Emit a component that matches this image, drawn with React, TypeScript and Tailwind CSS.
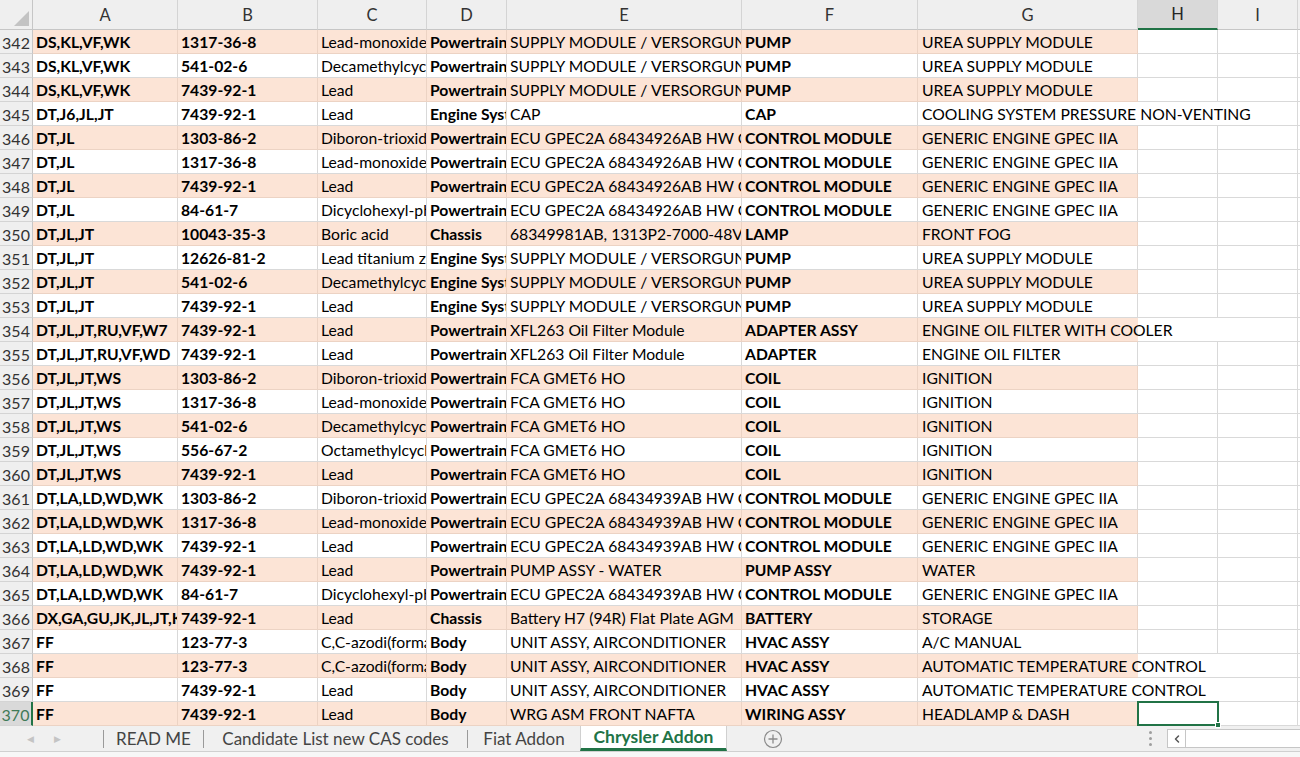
import { ChevronLeft } from "lucide-react";

type Row = [number, string, string, string, string, string, string, string];

const ROWS: Row[] = [
  [342, "DS,KL,VF,WK", "1317-36-8", "Lead-monoxide", "Powertrain", "SUPPLY MODULE / VERSORGUNGSMODUL", "PUMP", "UREA SUPPLY MODULE"],
  [343, "DS,KL,VF,WK", "541-02-6", "Decamethylcyclopentasiloxane", "Powertrain", "SUPPLY MODULE / VERSORGUNGSMODUL", "PUMP", "UREA SUPPLY MODULE"],
  [344, "DS,KL,VF,WK", "7439-92-1", "Lead", "Powertrain", "SUPPLY MODULE / VERSORGUNGSMODUL", "PUMP", "UREA SUPPLY MODULE"],
  [345, "DT,J6,JL,JT", "7439-92-1", "Lead", "Engine Systems", "CAP", "CAP", "COOLING SYSTEM PRESSURE NON-VENTING"],
  [346, "DT,JL", "1303-86-2", "Diboron-trioxide", "Powertrain", "ECU GPEC2A 68434926AB HW C", "CONTROL MODULE", "GENERIC ENGINE GPEC IIA"],
  [347, "DT,JL", "1317-36-8", "Lead-monoxide", "Powertrain", "ECU GPEC2A 68434926AB HW C", "CONTROL MODULE", "GENERIC ENGINE GPEC IIA"],
  [348, "DT,JL", "7439-92-1", "Lead", "Powertrain", "ECU GPEC2A 68434926AB HW C", "CONTROL MODULE", "GENERIC ENGINE GPEC IIA"],
  [349, "DT,JL", "84-61-7", "Dicyclohexyl-phthalate", "Powertrain", "ECU GPEC2A 68434926AB HW C", "CONTROL MODULE", "GENERIC ENGINE GPEC IIA"],
  [350, "DT,JL,JT", "10043-35-3", "Boric acid", "Chassis", "68349981AB, 1313P2-7000-48V", "LAMP", "FRONT FOG"],
  [351, "DT,JL,JT", "12626-81-2", "Lead titanium zirconium oxide", "Engine Systems", "SUPPLY MODULE / VERSORGUNGSMODUL", "PUMP", "UREA SUPPLY MODULE"],
  [352, "DT,JL,JT", "541-02-6", "Decamethylcyclopentasiloxane", "Engine Systems", "SUPPLY MODULE / VERSORGUNGSMODUL", "PUMP", "UREA SUPPLY MODULE"],
  [353, "DT,JL,JT", "7439-92-1", "Lead", "Engine Systems", "SUPPLY MODULE / VERSORGUNGSMODUL", "PUMP", "UREA SUPPLY MODULE"],
  [354, "DT,JL,JT,RU,VF,W7", "7439-92-1", "Lead", "Powertrain", "XFL263 Oil Filter Module", "ADAPTER ASSY", "ENGINE OIL FILTER WITH COOLER"],
  [355, "DT,JL,JT,RU,VF,WD", "7439-92-1", "Lead", "Powertrain", "XFL263 Oil Filter Module", "ADAPTER", "ENGINE OIL FILTER"],
  [356, "DT,JL,JT,WS", "1303-86-2", "Diboron-trioxide", "Powertrain", "FCA GMET6 HO", "COIL", "IGNITION"],
  [357, "DT,JL,JT,WS", "1317-36-8", "Lead-monoxide", "Powertrain", "FCA GMET6 HO", "COIL", "IGNITION"],
  [358, "DT,JL,JT,WS", "541-02-6", "Decamethylcyclopentasiloxane", "Powertrain", "FCA GMET6 HO", "COIL", "IGNITION"],
  [359, "DT,JL,JT,WS", "556-67-2", "Octamethylcyclotetrasiloxane", "Powertrain", "FCA GMET6 HO", "COIL", "IGNITION"],
  [360, "DT,JL,JT,WS", "7439-92-1", "Lead", "Powertrain", "FCA GMET6 HO", "COIL", "IGNITION"],
  [361, "DT,LA,LD,WD,WK", "1303-86-2", "Diboron-trioxide", "Powertrain", "ECU GPEC2A 68434939AB HW C", "CONTROL MODULE", "GENERIC ENGINE GPEC IIA"],
  [362, "DT,LA,LD,WD,WK", "1317-36-8", "Lead-monoxide", "Powertrain", "ECU GPEC2A 68434939AB HW C", "CONTROL MODULE", "GENERIC ENGINE GPEC IIA"],
  [363, "DT,LA,LD,WD,WK", "7439-92-1", "Lead", "Powertrain", "ECU GPEC2A 68434939AB HW C", "CONTROL MODULE", "GENERIC ENGINE GPEC IIA"],
  [364, "DT,LA,LD,WD,WK", "7439-92-1", "Lead", "Powertrain", "PUMP ASSY - WATER", "PUMP ASSY", "WATER"],
  [365, "DT,LA,LD,WD,WK", "84-61-7", "Dicyclohexyl-phthalate", "Powertrain", "ECU GPEC2A 68434939AB HW C", "CONTROL MODULE", "GENERIC ENGINE GPEC IIA"],
  [366, "DX,GA,GU,JK,JL,JT,KL", "7439-92-1", "Lead", "Chassis", "Battery H7 (94R) Flat Plate AGM", "BATTERY", "STORAGE"],
  [367, "FF", "123-77-3", "C,C-azodi(formamide)", "Body", "UNIT ASSY, AIRCONDITIONER", "HVAC ASSY", "A/C MANUAL"],
  [368, "FF", "123-77-3", "C,C-azodi(formamide)", "Body", "UNIT ASSY, AIRCONDITIONER", "HVAC ASSY", "AUTOMATIC TEMPERATURE CONTROL"],
  [369, "FF", "7439-92-1", "Lead", "Body", "UNIT ASSY, AIRCONDITIONER", "HVAC ASSY", "AUTOMATIC TEMPERATURE CONTROL"],
  [370, "FF", "7439-92-1", "Lead", "Body", "WRG ASM FRONT NAFTA", "WIRING ASSY", "HEADLAMP & DASH"],
];

// rows whose column G text spills over into H / I
const OVERFLOW = [345, 354, 368, 369];

const GRID = "grid grid-cols-[33px_145px_140px_109px_80px_235px_176px_220px_80px_80px_1fr]";
const LETTERS = ["A", "B", "C", "D", "E", "F", "G", "H", "I"];

const Cell = ({ text, bold, fill }: { text: string; bold?: boolean; fill: boolean }) => (
  <div
    className={`h-[24px] border-r border-b ${fill ? "bg-[#fce4d6] border-[#ecd3c4]" : "border-[#d9d9d9]"} pl-[3px] pt-[2px] flex items-center overflow-hidden whitespace-nowrap ${bold ? "font-bold" : ""}`}
  >
    {text}
  </div>
);

const App = () => {
  return (
    <div className="w-[1300px] h-[757px] overflow-hidden bg-white text-black font-['Lato','Liberation_Sans',sans-serif] text-[15.7px]">
      {/* Column headers */}
      <div className={`${GRID} h-[30px] bg-[#efefef] text-[#333] text-[16.5px]`}>
        <div className="border-r border-b border-[#c6c6c6] flex items-end justify-end pr-[3px] pb-[3px]">
          <svg width="15" height="15" viewBox="0 0 15 15">
            <polygon points="15,0 15,15 0,15" fill="#c3c3c3" />
          </svg>
        </div>
        {LETTERS.map(l => (
          <div
            key={l}
            className={`flex items-center justify-center pt-[1px] border-r ${l === "H" ? "bg-[#d9d9d9] border-b-2 border-b-[#217346] text-[#262626]" : "border-b border-b-[#c6c6c6]"} border-r-[#d4d4d4]`}
          >
            {l}
          </div>
        ))}
        <div className="border-b border-[#c6c6c6]" />
      </div>

      {/* Data rows */}
      {ROWS.map(([n, a, b, c, d, e, f, g]) => {
        const fill = n % 2 === 0;
        const over = OVERFLOW.includes(n);
        const sel = n === 370;
        return (
          <div key={n} className={GRID}>
            <div
              className={`h-[24px] flex items-center justify-center pt-[2px] text-[16px] border-b border-[#d4d4d4] ${sel ? "bg-[#d9d9d9] text-[#3f7a57] border-r-2 border-r-[#217346]" : "bg-[#efefef] text-[#333] border-r border-r-[#c6c6c6]"}`}
            >
              {n}
            </div>
            <Cell text={a} bold fill={fill} />
            <Cell text={b} bold fill={fill} />
            <Cell text={c} fill={fill} />
            <Cell text={d} bold fill={fill} />
            <Cell text={e} fill={fill} />
            <Cell text={f} bold fill={fill} />
            <div
              className={`h-[24px] border-b ${over ? "" : "border-r"} ${fill ? "bg-[#fce4d6] border-[#ecd3c4]" : "border-[#d9d9d9]"} pl-[4px] pt-[2px] flex items-center whitespace-nowrap`}
            >
              {g}
            </div>
            <div className={`relative h-[24px] border-b border-[#d9d9d9] ${over || sel ? "" : "border-r"}`}>
              {sel && (
                <div className="absolute -left-[1px] -top-[1px] w-[82px] h-[25px] border-2 border-[#217346]">
                  <div className="absolute -right-[4px] -bottom-[4px] w-[6px] h-[6px] bg-[#217346] border border-white" />
                </div>
              )}
            </div>
            <div className="h-[24px] border-r border-b border-[#d9d9d9]" />
            <div className="h-[24px] border-b border-[#d9d9d9]" />
          </div>
        );
      })}

      {/* Sheet tabs */}
      <div className="h-[26px] flex items-stretch bg-[#f0f0f0] border-b border-[#d0d0d0] text-[#444] text-[17px]">
        <div className="w-[103px] flex items-center text-[#c4c4c4] text-[9px]">
          <span className="ml-[27px]">◀</span>
          <span className="ml-[20px]">▶</span>
        </div>
        <div className="w-px h-[18px] self-center bg-[#9a9a9a]" />
        <div className="w-[99px] flex items-center justify-center">READ ME</div>
        <div className="w-px h-[18px] self-center bg-[#9a9a9a]" />
        <div className="w-[263px] flex items-center justify-center">Candidate List new CAS codes</div>
        <div className="w-px h-[18px] self-center bg-[#9a9a9a]" />
        <div className="w-[112px] flex items-center justify-center">Fiat Addon</div>
        <div className="w-[147px] bg-white flex items-center justify-center font-bold text-[17.5px] text-[#217346] border-b-[3px] border-[#217346] border-l border-l-[#d0d0d0] border-r border-r-[#d0d0d0]">
          Chrysler Addon
        </div>
        <div className="w-[92px] flex items-center justify-center">
          <svg width="20" height="20" viewBox="0 0 20 20">
            <circle cx="10" cy="10" r="8.5" fill="none" stroke="#8a8a8a" strokeWidth="1.2" />
            <path d="M10 5.5v9M5.5 10h9" stroke="#8a8a8a" strokeWidth="1.3" />
          </svg>
        </div>
        <div className="flex-1" />
        <div className="w-[34px] flex flex-col items-center justify-center gap-[3px]">
          <span className="w-[3px] h-[3px] rounded-full bg-[#9e9e9e]" />
          <span className="w-[3px] h-[3px] rounded-full bg-[#9e9e9e]" />
          <span className="w-[3px] h-[3px] rounded-full bg-[#9e9e9e]" />
        </div>
        <div className="w-[133px] h-[19px] self-center bg-white border border-[#c6c6c6] border-r-0 flex">
          <div className="w-[18px] border-r border-[#c6c6c6] flex items-center justify-center">
            <ChevronLeft className="w-3 h-3 text-[#555]" strokeWidth={3} />
          </div>
        </div>
      </div>
      <div className="h-[5px] bg-[#f7f7f7]" />
    </div>
  );
};

export default App;
